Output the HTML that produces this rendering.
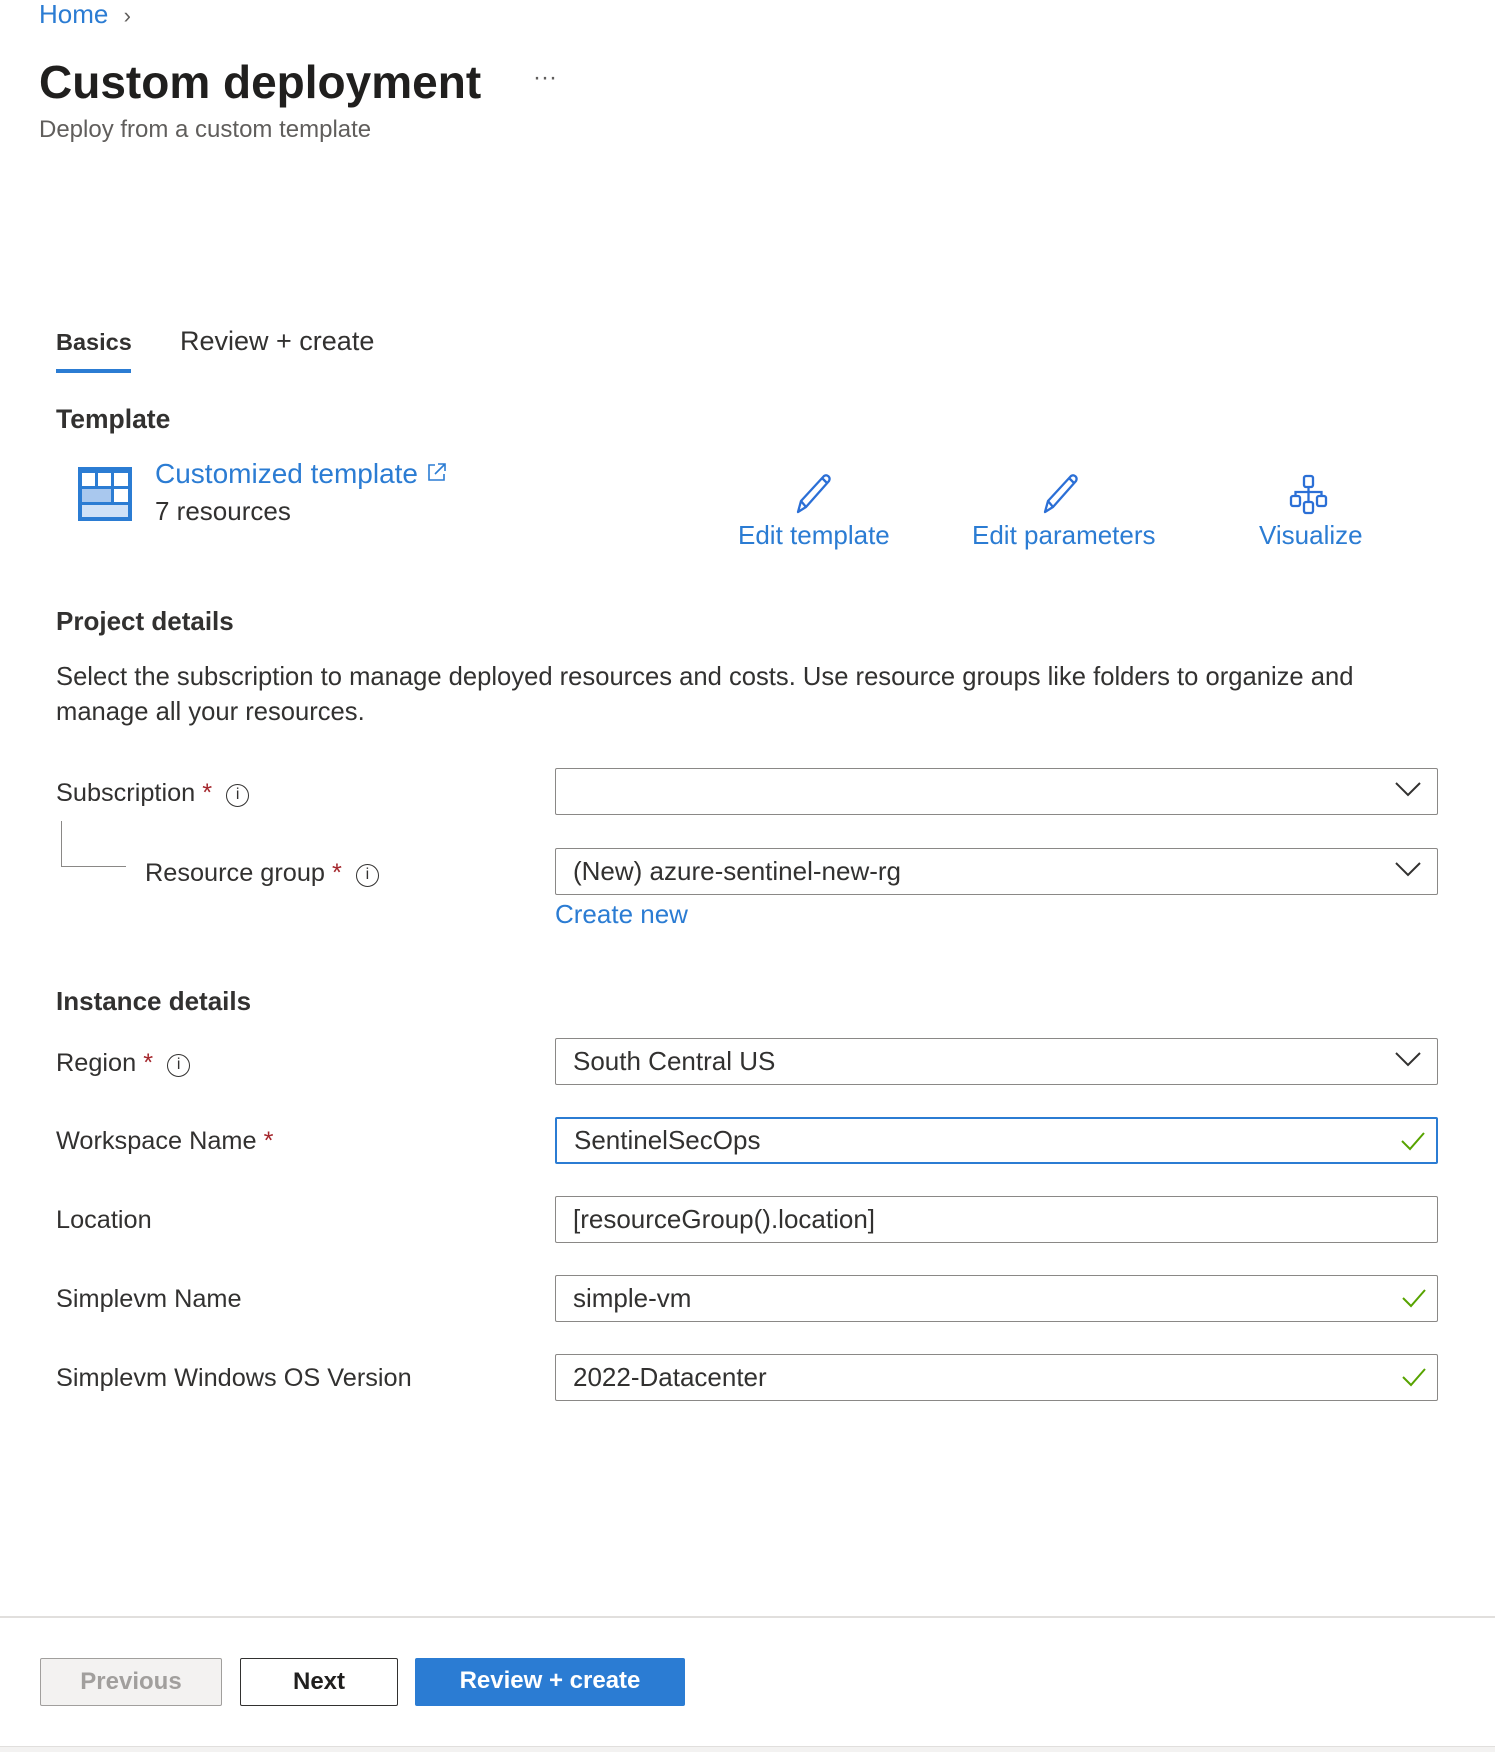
<!DOCTYPE html>
<html><head><meta charset="utf-8"><style>
*{box-sizing:border-box;margin:0;padding:0}
body{width:1495px;height:1752px;background:#fff;font-family:"Liberation Sans",sans-serif;color:#323130;position:relative;overflow:hidden}
.a{position:absolute;white-space:nowrap}
.t{font-size:25.3px;line-height:28px}
.blue{color:#2b7cd3}
.box{position:absolute;left:555px;width:883px;height:47px;border:1.5px solid #8a8886;border-radius:2px;font-size:26px;line-height:44px;padding-left:17px;color:#323130}
.chev{position:absolute;right:16px;top:12px}
.chk{position:absolute;right:10px;top:11px}
.req{color:#a4262c}
.info{display:inline-block;width:23px;height:23px;border:1.5px solid #323130;border-radius:50%;font-size:16px;line-height:20px;text-align:center;font-family:"Liberation Sans",sans-serif;vertical-align:2px}
.btn{position:absolute;top:1658px;height:48px;font-size:24px;font-weight:bold;text-align:center;line-height:46px;border-radius:2px}
</style></head><body>
<div class="a t blue" style="left:39px;top:0px;font-size:26px">Home <span style="color:#605e5c;font-size:22px;margin-left:8px">&#x203A;</span></div>
<div class="a" style="left:39px;top:54px;font-size:46px;font-weight:bold;color:#201f1e;line-height:56px">Custom deployment</div>
<div class="a" style="left:533px;top:64px;font-size:24px;color:#605e5c">···</div>
<div class="a t" style="left:39px;top:116px;color:#605e5c;font-size:24px">Deploy from a custom template</div>

<div class="a t" style="left:56px;top:328px;font-weight:bold;font-size:23.5px">Basics</div>
<div class="a" style="left:56px;top:369px;width:75px;height:4px;background:#2b7cd3"></div>
<div class="a t" style="left:180px;top:327px;font-size:27px">Review + create</div>

<div class="a t" style="left:56px;top:405px;font-weight:bold;font-size:26.5px">Template</div>
<svg class="a" style="left:78px;top:467px" width="54" height="54" viewBox="0 0 54 54">
<rect x="0" y="0" width="54" height="54" fill="#2b7cd3"/>
<rect x="4" y="6" width="13" height="13" fill="#fff"/><rect x="20" y="6" width="13" height="13" fill="#fff"/><rect x="36" y="6" width="14" height="13" fill="#fff"/>
<rect x="4" y="22" width="29" height="13" fill="#a9c8ee"/><rect x="36" y="22" width="14" height="13" fill="#fff"/>
<rect x="4" y="38" width="46" height="12" fill="#cfe1f7"/></svg>
<div class="a t blue" style="left:155px;top:460px;font-size:28px">Customized template <svg width="22" height="22" viewBox="0 0 22 22" style="vertical-align:0"><path d="M9 4H3v15h15v-6M12 3h7v7M19 3L9 13" fill="none" stroke="#2b7cd3" stroke-width="1.6"/></svg></div>
<div class="a t" style="left:155px;top:497px;font-size:26px">7 resources</div>

<svg class="a" style="left:795px;top:474px" width="40" height="40" viewBox="0 0 40 40"><path d="M3 38L6 27 29 2c3-2 7 1 5 5L11 33Z M6 27l5 6 M27 4l5 5" fill="none" stroke="#2b6fd6" stroke-width="2.3" stroke-linejoin="round"/></svg>
<div class="a t blue" style="left:738px;top:521px;font-size:26px">Edit template</div>
<svg class="a" style="left:1042px;top:474px" width="40" height="40" viewBox="0 0 40 40"><path d="M3 38L6 27 29 2c3-2 7 1 5 5L11 33Z M6 27l5 6 M27 4l5 5" fill="none" stroke="#2b6fd6" stroke-width="2.3" stroke-linejoin="round"/></svg>
<div class="a t blue" style="left:972px;top:521px;font-size:26px">Edit parameters</div>
<svg class="a" style="left:1288px;top:474px" width="42" height="42" viewBox="0 0 42 42"><g fill="none" stroke="#2b6fd6" stroke-width="2.3"><rect x="16" y="2" width="9" height="11" rx="2"/><rect x="3" y="22" width="9" height="10" rx="2"/><rect x="16" y="28" width="9" height="11" rx="2"/><rect x="29" y="22" width="9" height="10" rx="2"/><path d="M20.5 13v15M7.5 22v-4h26v4"/></g></svg>
<div class="a t blue" style="left:1259px;top:521px;font-size:26px">Visualize</div>

<div class="a t" style="left:56px;top:607px;font-weight:bold;font-size:26px">Project details</div>
<div class="a t" style="left:56px;top:660px;line-height:35px;white-space:normal;width:1420px;font-size:25.6px">Select the subscription to manage deployed resources and costs. Use resource groups like folders to organize and<br>manage all your resources.</div>

<div class="a t" style="left:56px;top:779px">Subscription <span class="req">*</span> &nbsp;<span class="info">i</span></div>
<div class="box" style="top:768px"><svg class="chev" width="26" height="16" viewBox="0 0 26 16"><path d="M1 2l12 12L25 2" fill="none" stroke="#323130" stroke-width="2"/></svg></div>
<div class="a" style="left:61px;top:821px;width:65px;height:46px;border-left:1.5px solid #8a8886;border-bottom:1.5px solid #8a8886"></div>
<div class="a t" style="left:145px;top:859px">Resource group <span class="req">*</span> &nbsp;<span class="info">i</span></div>
<div class="box" style="top:848px">(New) azure-sentinel-new-rg<svg class="chev" width="26" height="16" viewBox="0 0 26 16"><path d="M1 2l12 12L25 2" fill="none" stroke="#323130" stroke-width="2"/></svg></div>
<div class="a t blue" style="left:555px;top:900px;font-size:26px">Create new</div>

<div class="a t" style="left:56px;top:987px;font-weight:bold;font-size:26px">Instance details</div>
<div class="a t" style="left:56px;top:1049px">Region <span class="req">*</span> &nbsp;<span class="info">i</span></div>
<div class="box" style="top:1038px">South Central US<svg class="chev" width="26" height="16" viewBox="0 0 26 16"><path d="M1 2l12 12L25 2" fill="none" stroke="#323130" stroke-width="2"/></svg></div>
<div class="a t" style="left:56px;top:1127px">Workspace Name <span class="req">*</span></div>
<div class="box" style="top:1117px;border:2.5px solid #2b7cd3;line-height:42px">SentinelSecOps<svg class="chk" width="26" height="22" viewBox="0 0 26 22"><path d="M2 11l8 8L24 3" fill="none" stroke="#57a300" stroke-width="2"/></svg></div>
<div class="a t" style="left:56px;top:1206px">Location</div>
<div class="box" style="top:1196px">[resourceGroup().location]</div>
<div class="a t" style="left:56px;top:1285px">Simplevm Name</div>
<div class="box" style="top:1275px">simple-vm<svg class="chk" width="26" height="22" viewBox="0 0 26 22"><path d="M2 11l8 8L24 3" fill="none" stroke="#57a300" stroke-width="2"/></svg></div>
<div class="a t" style="left:56px;top:1364px">Simplevm Windows OS Version</div>
<div class="box" style="top:1354px">2022-Datacenter<svg class="chk" width="26" height="22" viewBox="0 0 26 22"><path d="M2 11l8 8L24 3" fill="none" stroke="#57a300" stroke-width="2"/></svg></div>

<div class="a" style="left:0;top:1616px;width:1495px;height:2px;background:#e1dfdd"></div>
<div class="btn" style="left:40px;width:182px;background:#f3f2f1;border:1.5px solid #a19f9d;color:#a19f9d">Previous</div>
<div class="btn" style="left:240px;width:158px;background:#fff;border:1.5px solid #323130;color:#201f1e">Next</div>
<div class="btn" style="left:415px;width:270px;background:#2b7cd3;color:#fff">Review + create</div>
<div class="a" style="left:0;top:1746px;width:1495px;height:6px;background:#f3f2f1;border-top:1px solid #e1dfdd"></div>
</body></html>
